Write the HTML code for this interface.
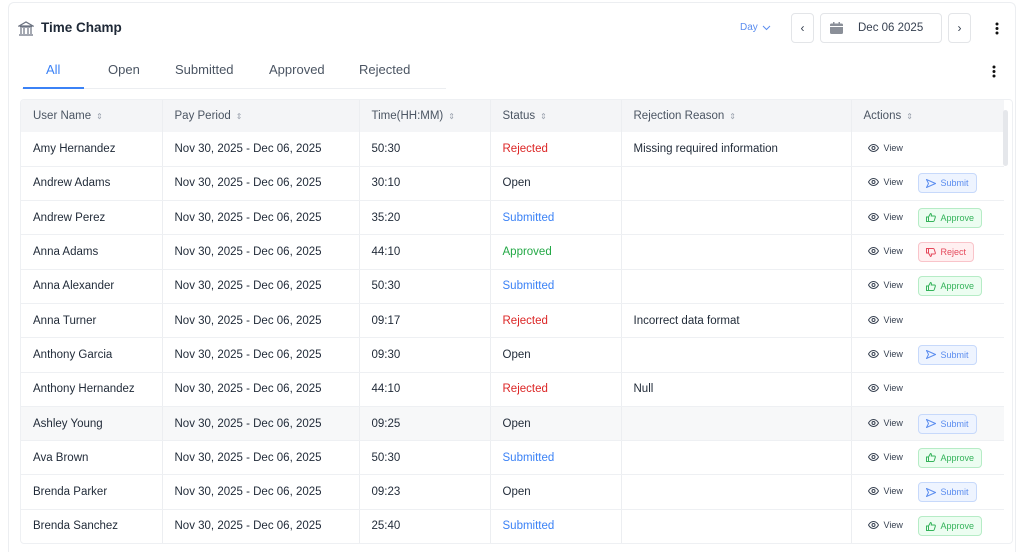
<!DOCTYPE html>
<html><head><style>
*{box-sizing:border-box;margin:0;padding:0}
html,body{width:1024px;height:552px;overflow:hidden}
body{background:#fff;font-family:"Liberation Sans",sans-serif;color:#1f2937;position:relative}
.card{position:absolute;left:8px;top:2px;width:1008px;height:550px;border:1px solid #eceef1;border-bottom:none;border-radius:6px 6px 0 0}
.title{position:absolute;left:41px;top:20px;font-size:13.5px;font-weight:bold;color:#1f2937}
.tabs{position:absolute;left:22px;top:60px;width:424px;height:29px;border-bottom:1px solid #eceef1}
.tab{position:absolute;top:2px;font-size:13px;color:#4b5563}
.tbl{position:absolute;left:20px;top:99px;width:993px;height:445px;border:1px solid #eef0f3;border-radius:4px;overflow:hidden}
table{border-collapse:collapse;table-layout:fixed;width:983px;font-size:11.5px}
th{background:#f4f5f7;height:32px;text-align:left;font-weight:normal;color:#4b5563;padding-left:12px;border-right:1px solid #eceef1}
td{height:34.3px;padding-left:12px;border-right:1px solid #eceef1;border-bottom:1px solid #eef0f3;color:#1f2937;white-space:nowrap}
th:last-child,td:last-child{border-right:none}
.s{font-size:8px;color:#9ca3af;margin-left:5px}
.rej{color:#dc2626}.sub{color:#3b82f6}.app{color:#22a845}
.v{font-size:9px;color:#374151;display:inline-flex;align-items:center;gap:5px;width:50px;margin-left:4px}
.b{display:inline-flex;align-items:center;gap:5px;font-size:9px;height:20px;padding:0 7px;border-radius:4px;border:1px solid;vertical-align:middle}
.bs{background:#eef4ff;border-color:#c7d9fb;color:#5b8def}
.ba{background:#ecfdf1;border-color:#b6ecc6;color:#34b35a}
.br{background:#fff0f1;border-color:#f9c4ca;color:#e5485b}
tr.h td{background:#f7f8f9}
</style></head><body>
<div class="card"></div>
<svg style="position:absolute;left:18px;top:21px" width="16" height="15" viewBox="0 0 16 15" fill="none" stroke="#6b7280" stroke-width="1.2"><path d="M1 5L8 1l7 4zM2 6h12M3 7v6M6 7v6M10 7v6M13 7v6M1 14h14"/></svg>
<div class="title">Time Champ</div>
<div style="position:absolute;left:740px;top:22px;font-size:10px;color:#5b8def">Day</div>
<svg style="position:absolute;left:762px;top:25px" width="9" height="6" viewBox="0 0 9 6" fill="none" stroke="#5b8def"><path d="M1 1l3.5 3.5L8 1"/></svg>
<div style="position:absolute;left:791px;top:13px;width:23px;height:30px;border:1px solid #e3e5e8;border-radius:4px;text-align:center;line-height:28px;font-size:12px;color:#374151">‹</div>
<div style="position:absolute;left:820px;top:13px;width:122px;height:30px;border:1px solid #e3e5e8;border-radius:4px;font-size:11.5px;color:#374151;line-height:28px;padding-left:37px">Dec 06 2025</div>
<svg style="position:absolute;left:830px;top:22px" width="13" height="12" viewBox="0 0 13 12"><rect x="0" y="1.5" width="13" height="10.5" rx="1.5" fill="#8a8f98"/><rect x="0" y="4" width="13" height="1" fill="#fff"/><rect x="3" y="0" width="1.5" height="3" fill="#8a8f98"/><rect x="8.5" y="0" width="1.5" height="3" fill="#8a8f98"/></svg>
<div style="position:absolute;left:948px;top:13px;width:23px;height:30px;border:1px solid #e3e5e8;border-radius:4px;text-align:center;line-height:28px;font-size:12px;color:#374151">›</div>
<svg style="position:absolute;left:995px;top:22px" width="4" height="13"><circle cx="2" cy="2" r="1.5" fill="#111"/><circle cx="2" cy="6.5" r="1.5" fill="#111"/><circle cx="2" cy="11" r="1.5" fill="#111"/></svg>
<svg style="position:absolute;left:992px;top:65px" width="4" height="13"><circle cx="2" cy="2" r="1.5" fill="#111"/><circle cx="2" cy="6.5" r="1.5" fill="#111"/><circle cx="2" cy="11" r="1.5" fill="#111"/></svg>
<div class="tabs">
<div class="tab" style="left:24px;color:#3b82f6">All</div>
<div style="position:absolute;left:1px;top:27px;width:61px;height:2px;background:#3b82f6"></div>
<div class="tab" style="left:86px">Open</div>
<div class="tab" style="left:153px">Submitted</div>
<div class="tab" style="left:247px">Approved</div>
<div class="tab" style="left:337px">Rejected</div>
</div>
<div class="tbl">
<div style="position:absolute;right:4px;top:10px;width:5px;height:56px;background:#e5e7eb;border-radius:3px"></div>
<table>
<colgroup><col style="width:141px"><col style="width:197px"><col style="width:131px"><col style="width:131px"><col style="width:230px"><col></colgroup>
<tr><th>User Name<span class="s">⇕</span></th><th>Pay Period<span class="s">⇕</span></th><th>Time(HH:MM)<span class="s">⇕</span></th><th>Status<span class="s">⇕</span></th><th>Rejection Reason<span class="s">⇕</span></th><th>Actions<span class="s">⇕</span></th></tr>
<tbody id="b"></tbody>
</table></div>
<script>
const eye='<svg width="11" height="8" viewBox="0 0 11 8" fill="none" stroke="#374151" stroke-width="1"><path d="M.5 4C2 1.3 4 .5 5.5.5S9 1.3 10.5 4C9 6.7 7 7.5 5.5 7.5S2 6.7.5 4z"/><circle cx="5.5" cy="4" r="1.5"/></svg>';
const bt={Open:'<span class="b bs"><svg width="10" height="9" viewBox="0 0 10 9" fill="none" stroke="#5b8def"><path d="M.5.5l9 4-9 4 2-4z"/></svg>Submit</span>',
Submitted:'<span class="b ba"><svg width="10" height="9" viewBox="0 0 10 9" fill="none" stroke="#34b35a"><path d="M.5 4h2v4.5h-2zM2.5 4l2-3.5c1 0 1 1 .8 2.5h3.2c.7 0 1 .5.8 1.2l-1 3.3c-.2.6-.5 1-1 1h-4.8"/></svg>Approve</span>',
Approved:'<span class="b br"><svg width="10" height="9" viewBox="0 0 10 9" fill="none" stroke="#e5485b"><path d="M.5.5h2V5h-2zM2.5 5l2 3.5c1 0 1-1 .8-2.5h3.2c.7 0 1-.5.8-1.2l-1-3.3c-.2-.6-.5-1-1-1h-4.8"/></svg>Reject</span>',Rejected:''};
const rows=[["Amy Hernandez","50:30","Rejected","Missing required information"],["Andrew Adams","30:10","Open",""],["Andrew Perez","35:20","Submitted",""],["Anna Adams","44:10","Approved",""],["Anna Alexander","50:30","Submitted",""],["Anna Turner","09:17","Rejected","Incorrect data format"],["Anthony Garcia","09:30","Open",""],["Anthony Hernandez","44:10","Rejected","Null"],["Ashley Young","09:25","Open",""],["Ava Brown","50:30","Submitted",""],["Brenda Parker","09:23","Open",""],["Brenda Sanchez","25:40","Submitted",""]];
const cls={Rejected:'rej',Submitted:'sub',Approved:'app',Open:''};
document.getElementById('b').innerHTML=rows.map((r,i)=>`<tr${i==8?' class="h"':''}><td>${r[0]}</td><td>Nov 30, 2025 - Dec 06, 2025</td><td>${r[1]}</td><td class="${cls[r[2]]}">${r[2]}</td><td>${r[3]}</td><td><span class="v">${eye}View</span>${bt[r[2]]}</td></tr>`).join('');
</script>
</body></html>
